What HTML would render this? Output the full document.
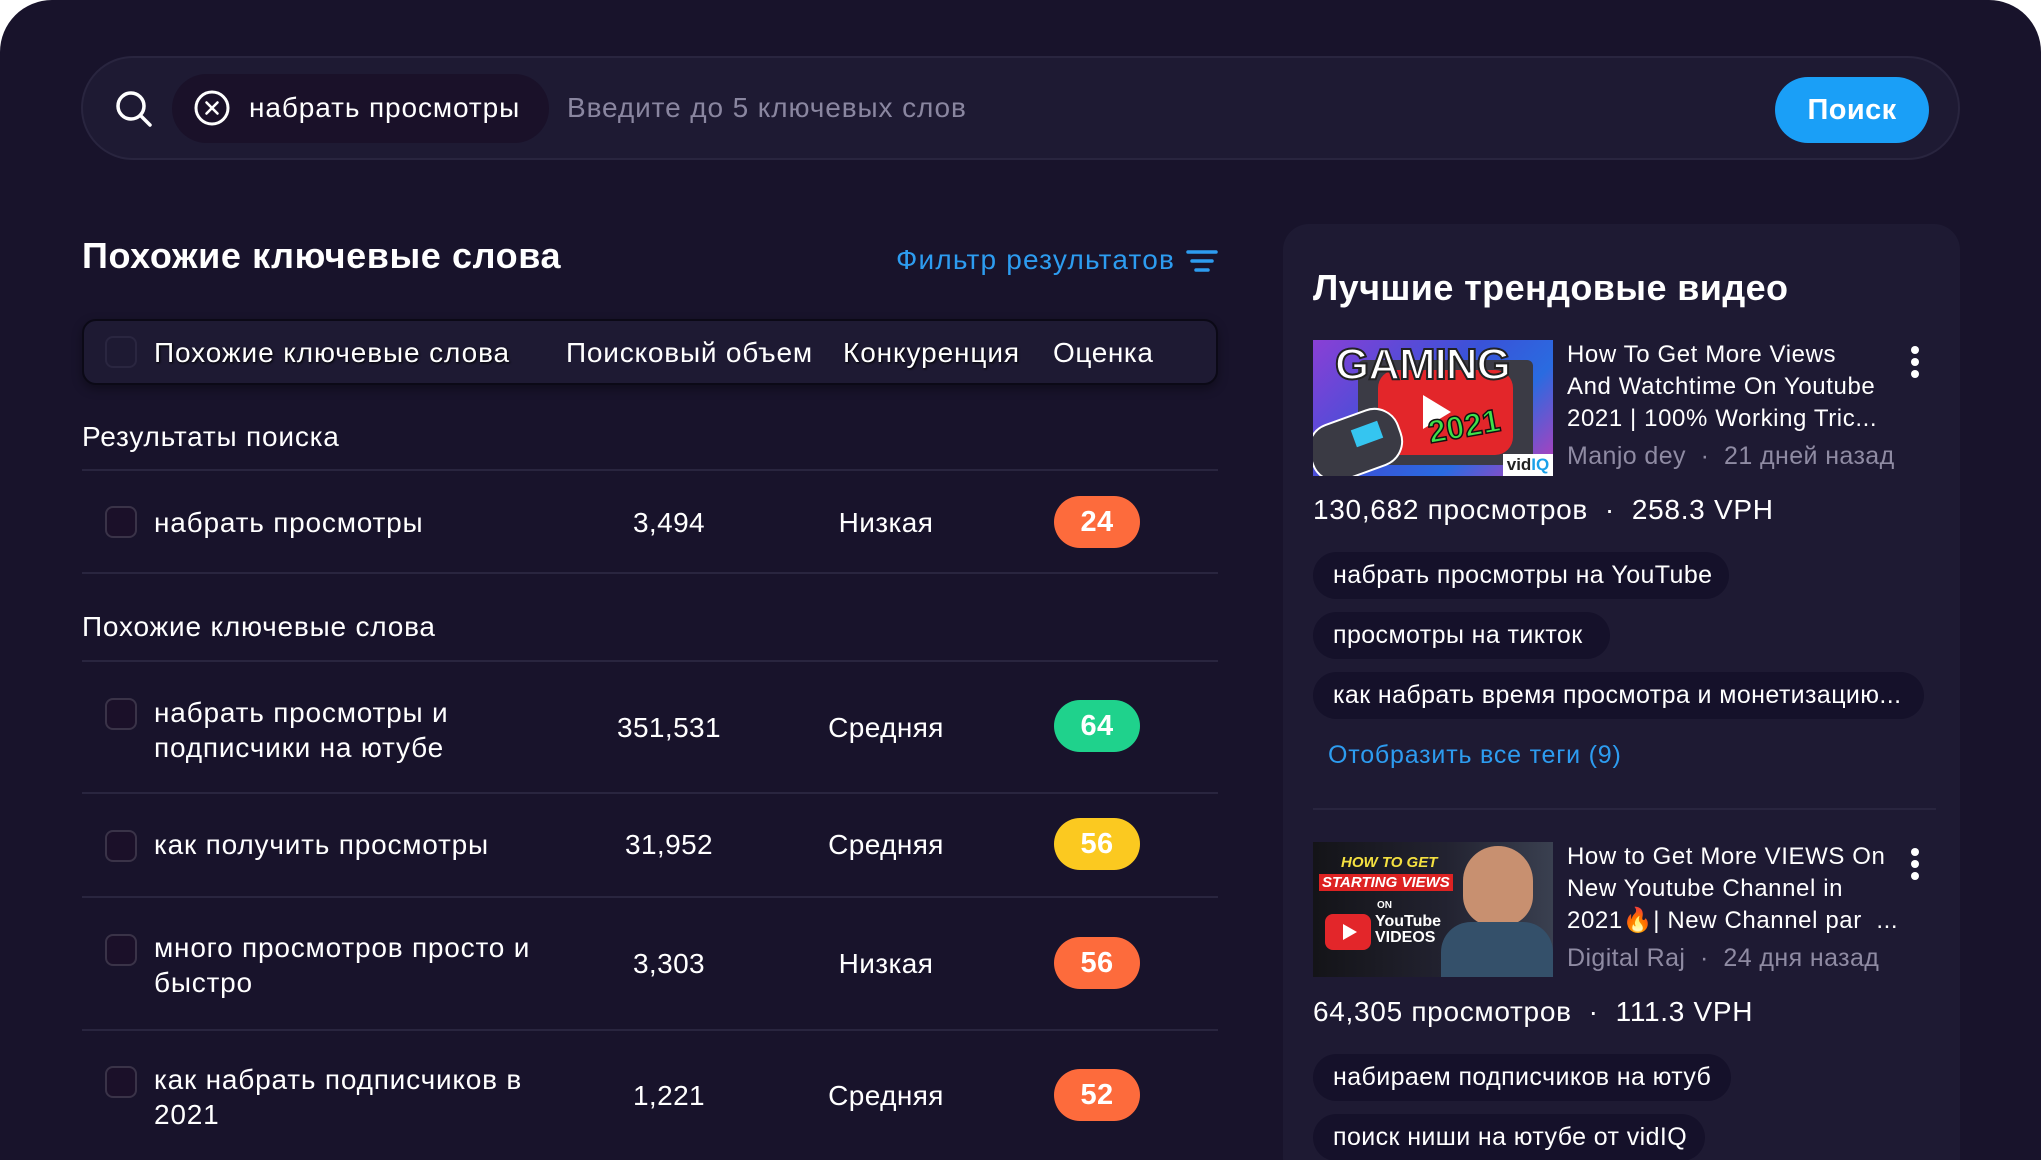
<!DOCTYPE html>
<html><head><meta charset="utf-8"><style>
*{margin:0;padding:0;box-sizing:border-box}
html,body{width:2041px;height:1160px;background:#fff;overflow:hidden}
body{font-family:"Liberation Sans","DejaVu Sans",sans-serif;color:#fff;letter-spacing:0.4px}
#app{position:absolute;left:0;top:0;width:2041px;height:1160px;background:#18132b;border-radius:52px 52px 0 0;overflow:hidden}
.a{position:absolute;white-space:nowrap}
.t{font-size:28px;line-height:35px}
.cb{position:absolute;width:32px;height:32px;border:2px solid #3a3348;border-radius:8px;background:#1b1029}
.hr{position:absolute;left:82px;width:1136px;height:2px;background:#29253f}
.badge{position:absolute;width:86px;height:52px;border-radius:26px;font-weight:bold;font-size:29px;line-height:52px;text-align:center;color:#fff}
.num{position:absolute;width:200px;text-align:center;font-size:28px;line-height:35px}
.tag{position:absolute;left:1313px;height:47px;border-radius:24px;background:#15112a;font-size:25px;line-height:47px;padding-left:20px;color:#fff}
.vt{position:absolute;left:1567px;font-size:24px;line-height:32px;white-space:nowrap}
.meta{color:#8f8ba3}
.dots{position:absolute;width:8px}
.dots i{display:block;width:8px;height:8px;border-radius:4px;background:#fff;margin-bottom:4px}
</style></head><body><div id="app">

<div class="a" style="left:81px;top:56px;width:1879px;height:104px;border-radius:52px;background:#1e1a33;border:2px solid #29253f"></div>
<svg class="a" style="left:114px;top:89px" width="40" height="40" viewBox="0 0 40 40"><circle cx="17" cy="17" r="13" fill="none" stroke="#fff" stroke-width="3.5"/><line x1="26.5" y1="26.5" x2="36" y2="36" stroke="#fff" stroke-width="3.5" stroke-linecap="round"/></svg>
<div class="a" style="left:172px;top:74px;width:377px;height:69px;border-radius:35px;background:#1a1129"></div>
<svg class="a" style="left:194px;top:90px" width="36" height="36" viewBox="0 0 36 36"><circle cx="18" cy="18" r="16" fill="none" stroke="#fff" stroke-width="3"/><path d="M12.5 12.5L23.5 23.5M23.5 12.5L12.5 23.5" stroke="#fff" stroke-width="2.6" stroke-linecap="round"/></svg>
<div class="a" style="left:249px;top:90px;font-size:28px;line-height:35px;letter-spacing:0.9px">набрать просмотры</div>
<div class="a" style="left:567px;top:90px;font-size:28px;line-height:35px;color:#8a86a0;letter-spacing:0.9px">Введите до 5 ключевых слов</div>
<div class="a" style="left:1775px;top:77px;width:154px;height:66px;border-radius:33px;background:#1a9ff7;font-weight:bold;font-size:29px;line-height:66px;text-align:center">Поиск</div>

<div class="a" style="left:82px;top:235px;font-size:36px;line-height:42px;font-weight:bold;letter-spacing:0.6px">Похожие ключевые слова</div>
<div class="a" style="left:896px;top:242px;font-size:28px;line-height:35px;color:#2d9cf0;letter-spacing:1.2px">Фильтр результатов</div>
<svg class="a" style="left:1186px;top:249px" width="32" height="24" viewBox="0 0 32 24"><path d="M2 3H30M6 12H26M10 21H22" stroke="#2d9cf0" stroke-width="3.5" stroke-linecap="round"/></svg>

<div class="a" style="left:82px;top:319px;width:1136px;height:66px;border-radius:14px;background:#1e1a33;border:2px solid #0b0916;box-shadow:0 4px 10px rgba(0,0,0,.35)"></div>
<div class="cb" style="left:105px;top:336px;background:#1e1a33;border-color:#2a2640"></div>
<div class="a t" style="left:154px;top:335px;text-shadow:1px 1px 2px #000;letter-spacing:0.9px">Похожие ключевые слова</div>
<div class="a t" style="left:566px;top:335px;letter-spacing:0.8px">Поисковый объем</div>
<div class="a t" style="left:843px;top:335px;text-shadow:1px 1px 2px #000;letter-spacing:0.9px">Конкуренция</div>
<div class="a t" style="left:1053px;top:335px;letter-spacing:0.6px">Оценка</div>

<div class="a t" style="left:82px;top:419px;letter-spacing:0.8px">Результаты поиска</div>
<div class="hr" style="top:469px"></div>
<div class="cb" style="left:105px;top:506px"></div>
<div class="a t" style="left:154px;top:505px;letter-spacing:0.8px">набрать просмотры</div>
<div class="num" style="left:569px;top:505px">3,494</div>
<div class="num" style="left:786px;top:505px">Низкая</div>
<div class="badge" style="left:1054px;top:496px;background:#fd6b3c">24</div>
<div class="hr" style="top:572px"></div>

<div class="a t" style="left:82px;top:609px;letter-spacing:0.8px">Похожие ключевые слова</div>
<div class="hr" style="top:660px"></div>
<div class="cb" style="left:105px;top:698px"></div>
<div class="a t" style="left:154px;top:695px;letter-spacing:0.8px">набрать просмотры и<br>подписчики на ютубе</div>
<div class="num" style="left:569px;top:710px">351,531</div>
<div class="num" style="left:786px;top:710px">Средняя</div>
<div class="badge" style="left:1054px;top:700px;background:#1fd28c">64</div>
<div class="hr" style="top:792px"></div>

<div class="cb" style="left:105px;top:830px"></div>
<div class="a t" style="left:154px;top:827px;letter-spacing:0.8px">как получить просмотры</div>
<div class="num" style="left:569px;top:827px">31,952</div>
<div class="num" style="left:786px;top:827px">Средняя</div>
<div class="badge" style="left:1054px;top:818px;background:#fbc920">56</div>
<div class="hr" style="top:896px"></div>

<div class="cb" style="left:105px;top:934px"></div>
<div class="a t" style="left:154px;top:930px;letter-spacing:0.8px">много просмотров просто и<br>быстро</div>
<div class="num" style="left:569px;top:946px">3,303</div>
<div class="num" style="left:786px;top:946px">Низкая</div>
<div class="badge" style="left:1054px;top:937px;background:#fd6b3c">56</div>
<div class="hr" style="top:1029px"></div>

<div class="cb" style="left:105px;top:1066px"></div>
<div class="a t" style="left:154px;top:1062px;letter-spacing:0.8px">как набрать подписчиков в<br>2021</div>
<div class="num" style="left:569px;top:1078px">1,221</div>
<div class="num" style="left:786px;top:1078px">Средняя</div>
<div class="badge" style="left:1054px;top:1069px;background:#fd6b3c">52</div>

<div class="a" style="left:1283px;top:224px;width:677px;height:960px;border-radius:26px;background:#1e1a33"></div>
<div class="a" style="left:1313px;top:267px;font-size:36px;line-height:42px;font-weight:bold;letter-spacing:0.4px">Лучшие трендовые видео</div>

<div class="a" style="left:1313px;top:340px;width:240px;height:136px;overflow:hidden;background:linear-gradient(135deg,#8a3fd6 0%,#3a52d8 45%,#2a6be0 70%,#c03ab8 100%)">
  <div style="position:absolute;left:45px;top:20px;width:175px;height:105px;background:#3b3b45;border-radius:6px"></div>
  <div style="position:absolute;left:65px;top:30px;width:135px;height:85px;background:#e3262a;border-radius:18px"></div>
  <div style="position:absolute;left:110px;top:55px;width:0;height:0;border-left:28px solid #fff;border-top:17px solid transparent;border-bottom:17px solid transparent"></div>
  <div style="position:absolute;left:22px;top:0;font-weight:900;font-size:44px;color:#fff;letter-spacing:-1px;-webkit-text-stroke:2px #222">GAMING</div>
  <div style="position:absolute;left:115px;top:68px;font-weight:900;font-size:32px;color:#3fe04a;-webkit-text-stroke:1.5px #111;transform:rotate(-10deg)">2021</div>
  <div style="position:absolute;left:-5px;top:75px;width:95px;height:60px;background:#3a3a44;border-radius:26px;border:2px solid #fff;transform:rotate(-20deg)"></div>
  <div style="position:absolute;left:40px;top:85px;width:28px;height:18px;background:#35c5f0;transform:rotate(-20deg)"></div>
  <div style="position:absolute;right:0;bottom:0;width:50px;height:22px;background:#fff;font-weight:bold;font-size:17px;line-height:22px;color:#222;text-align:center;letter-spacing:0">vid<span style="color:#1aa0e8">IQ</span></div>
</div>
<div class="vt" style="top:339px;letter-spacing:0.6px">How To Get More Views<br>And Watchtime On Youtube<br>2021 | 100% Working Tric...</div>
<div class="vt meta" style="top:440px;font-size:25px">Manjo dey &nbsp;·&nbsp; 21 дней назад</div>
<div class="dots" style="left:1911px;top:346px"><i></i><i></i><i></i></div>
<div class="a" style="left:1313px;top:492px;font-size:28px;line-height:35px;letter-spacing:0.7px">130,682 просмотров &nbsp;·&nbsp; 258.3 VPH</div>
<div class="tag" style="top:552px;width:416px">набрать просмотры на YouTube</div>
<div class="tag" style="top:612px;width:297px">просмотры на тикток</div>
<div class="tag" style="top:672px;width:611px">как набрать время просмотра и монетизацию...</div>
<div class="a" style="left:1328px;top:739px;font-size:25px;line-height:32px;color:#2d9cf0;letter-spacing:0.8px">Отобразить все теги (9)</div>
<div class="a" style="left:1313px;top:808px;width:623px;height:2px;background:#29253f"></div>

<div class="a" style="left:1313px;top:842px;width:240px;height:135px;overflow:hidden;background:linear-gradient(90deg,#141418 0%,#222230 55%,#3a4050 100%);letter-spacing:0">
  <div style="position:absolute;left:28px;top:12px;font-weight:900;font-style:italic;font-size:15px;color:#f4e040">HOW TO GET</div>
  <div style="position:absolute;left:6px;top:32px;padding:0 3px;background:#d22;font-weight:900;font-style:italic;font-size:15px;color:#fff">STARTING VIEWS</div>
  <div style="position:absolute;left:64px;top:58px;font-weight:bold;font-size:10px;color:#fff">ON</div>
  <div style="position:absolute;left:12px;top:72px;width:46px;height:36px;background:#e3262a;border-radius:8px"></div>
  <div style="position:absolute;left:30px;top:82px;border-left:14px solid #fff;border-top:8px solid transparent;border-bottom:8px solid transparent"></div>
  <div style="position:absolute;left:62px;top:72px;font-weight:bold;font-size:16px;line-height:16px;color:#fff">YouTube<br>VIDEOS</div>
  <div style="position:absolute;left:150px;top:4px;width:70px;height:80px;background:#c89070;border-radius:35px 35px 30px 30px"></div>
  <div style="position:absolute;left:128px;top:80px;width:112px;height:60px;background:#34506a;border-radius:30px 30px 0 0"></div>
</div>
<div class="vt" style="top:841px;letter-spacing:0.6px">How to Get More VIEWS On<br>New Youtube Channel in<br>2021🔥| New Channel par &nbsp;...</div>
<div class="vt meta" style="top:942px;font-size:25px">Digital Raj &nbsp;·&nbsp; 24 дня назад</div>
<div class="dots" style="left:1911px;top:848px"><i></i><i></i><i></i></div>
<div class="a" style="left:1313px;top:994px;font-size:28px;line-height:35px;letter-spacing:0.7px">64,305 просмотров &nbsp;·&nbsp; 111.3 VPH</div>
<div class="tag" style="top:1054px;width:418px">набираем подписчиков на ютуб</div>
<div class="tag" style="top:1114px;width:392px">поиск ниши на ютубе от vidIQ</div>

</div></body></html>
